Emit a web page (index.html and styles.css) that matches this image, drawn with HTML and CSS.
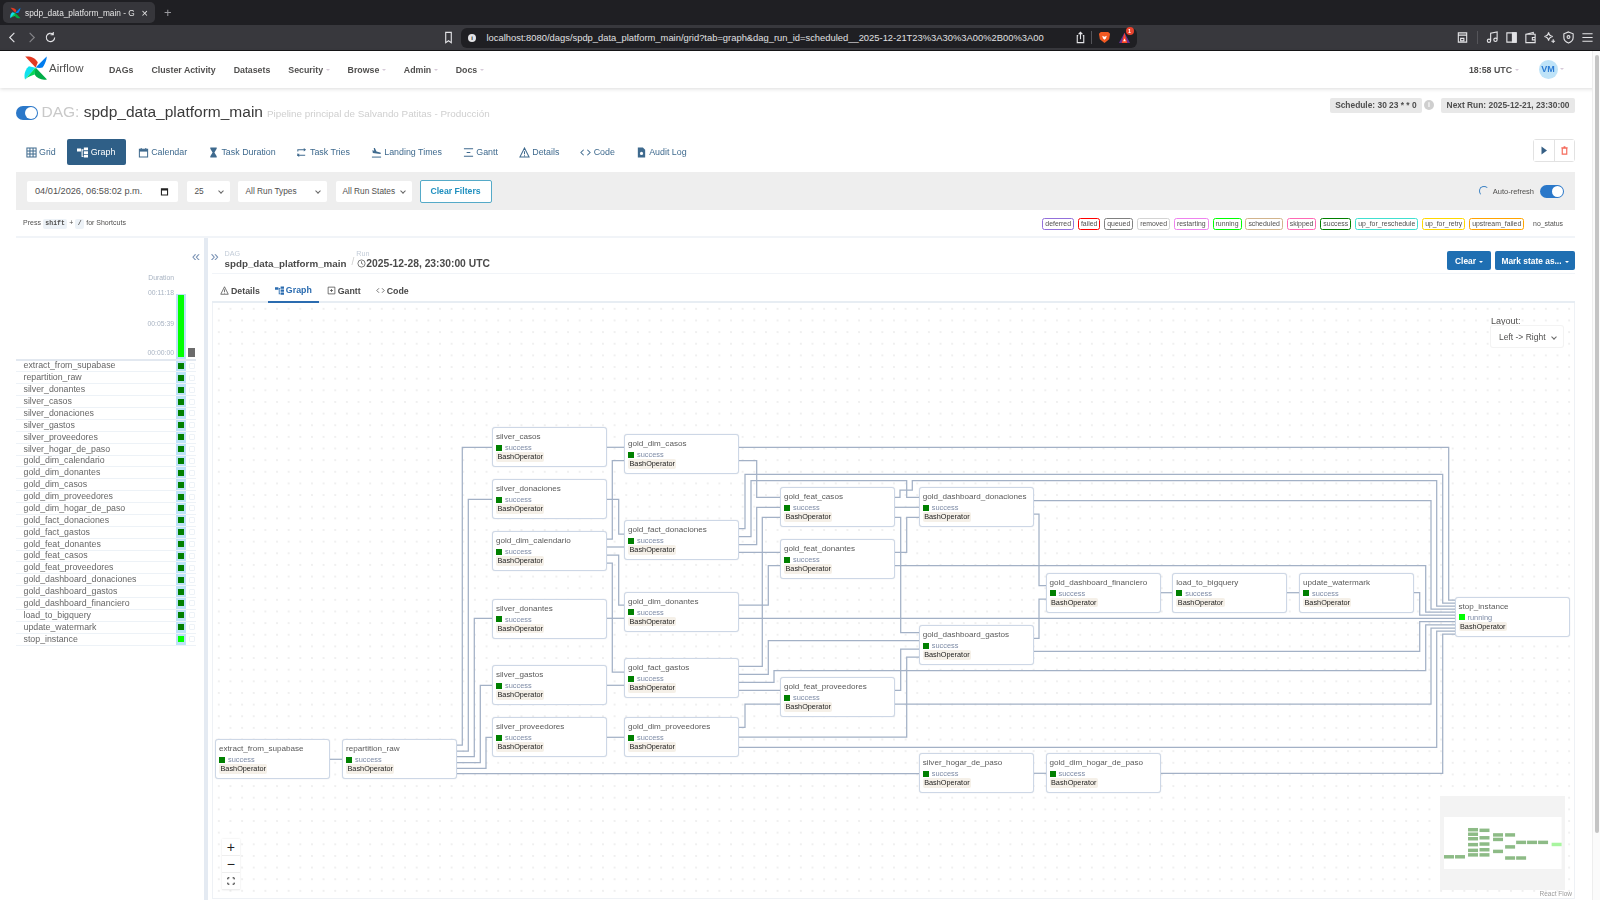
FILE: index.html
```html
<!DOCTYPE html>
<html lang="en">
<head>
<meta charset="utf-8">
<title>spdp_data_platform_main - Grid - Airflow</title>
<link rel="stylesheet" href="styles.css">
</head>
<body>
<svg class="defs" width="0" height="0" aria-hidden="true">
  <symbol id="logo" viewBox="0 0 24 24">
    <path fill="#e43921" d="M11.6 11.6 1.2.6C5.5-.2 11.8 1.6 13.8 6.6z"/>
    <path fill="#017cee" d="M11.6 11.6 22.6.4c.5 1-1 7-4 11.2-1.500.6-4.500.6-7 0z"/>
    <path fill="#11e1ee" d="M11.400 11.800 1 23.400C-.4 19 .9 13.500 4.900 10.200z"/>
    <path fill="#00ad46" d="M11.800 11.800 23 23.400c-4.500 1-10-.4-12.400-4.800-.6-2.200.2-5 1.200-6.800z"/>
    <path fill="#04d659" d="M11.600 11.600 1 23.400c3-2.800 7.500-4 9.600-4.800z"/>
  </symbol>
  <symbol id="graphico" viewBox="0 0 12 11">
    <path fill="currentColor" d="M0 1h4.500v3.500H0zM7.500 0H12v3H7.500zM7.500 4H12v3H7.500zM7.500 8H12v3H7.500zM5 2h2v1.200H6.200v6.300H7v1H5z"/>
  </symbol>
</svg>

<div class="page">
  <header class="chrome">
    <div class="tabbar">
      <div class="tab">
        <svg class="favicon"><use href="#logo"/></svg>
        <span class="tab-title">spdp_data_platform_main - G</span>
        <span class="tab-close">×</span>
      </div>
      <span class="tab-new">+</span>
    </div>
    <div class="toolbar">
      <div class="tb-nav">
        <svg class="tb-ico" viewBox="0 0 14 14"><path d="M9 2 4 7l5 5"/></svg>
        <svg class="tb-ico dim" viewBox="0 0 14 14"><path d="m5 2 5 5-5 5"/></svg>
        <svg class="tb-ico" viewBox="0 0 14 14"><path d="M11.500 7a4.500 4.500 0 1 1-1.600-3.500M10 1v3H7"/></svg>
      </div>
      <svg class="tb-ico bookmark" viewBox="0 0 14 14"><path d="M4 1.500h6v11l-3-2-3 2z"/></svg>
      <div class="urlbar">
        <span class="url-info">i</span>
        <span class="url-text">localhost:8080/dags/spdp_data_platform_main/grid?tab=graph&amp;dag_run_id=scheduled__2025-12-21T23%3A30%3A00%2B00%3A00</span>
        <svg class="tb-ico share" viewBox="0 0 14 14"><path d="M4.500 5H3.500v7.500h7V5h-1M7 9V1.500M5 3.500l2-2 2 2"/></svg>
        <span class="url-sep"></span>
        <svg class="brave" viewBox="0 0 14 14"><path fill="#f15a22" d="M3 1h8l2 2-1 6-5 4-5-4-1-6z"/><path fill="#fff" d="M4.500 5 7 6.200 9.500 5 8.500 8 7 9.500 5.500 8z"/></svg>
        <span class="rewards">
          <svg class="brave" viewBox="0 0 14 14"><path fill="#662d91" d="M7 2 13 13H1z"/><path fill="#ff4724" d="M7 2 10 13H4z"/><path fill="#fff" d="M7 8l1.500 3h-3z"/></svg>
          <b class="badge">1</b>
        </span>
      </div>
      <div class="tb-right">
        <svg class="tb-ico" viewBox="0 0 14 14"><path d="M2.500 2h9v10h-9zM2.500 4.500h9M5 8h3.500v2.500H5z"/></svg>
        <span class="tb-sep"></span>
        <svg class="tb-ico" viewBox="0 0 14 14"><path d="M5 10.500V2.500l7-1.500v8M5 10.500a1.800 1.800 0 1 1-3.600 0 1.800 1.800 0 0 1 3.600 0zM12 9.500a1.800 1.800 0 1 1-3.600 0 1.800 1.800 0 0 1 3.600 0z"/></svg>
        <svg class="tb-ico" viewBox="0 0 14 14"><path d="M2 2h10v10H2z"/><path class="solid" d="M8 2h4v10H8z"/></svg>
        <svg class="tb-ico" viewBox="0 0 14 14"><path d="M2 3.500 10 1.500v2M2 3.500h10v9H2zM9 7h3v2.500H9z"/></svg>
        <svg class="tb-ico" viewBox="0 0 14 14"><path d="M6 1.500c.5 3 1.500 4 4.500 4.500-3 .5-4 1.500-4.500 4.500-.5-3-1.500-4-4.500-4.500 3-.5 4-1.500 4.500-4.500zM11 9v4M9 11h4"/></svg>
        <svg class="tb-ico" viewBox="0 0 14 14"><path d="M7 1 12 3v4c0 3-2.500 5-5 6-2.500-1-5-3-5-6V3zM7 5a1.500 1.500 0 1 1 0 3 1.500 1.500 0 0 1 0-3z"/></svg>
        <svg class="tb-ico" viewBox="0 0 14 14"><path d="M1.500 3h11M1.500 7h11M1.500 11h11"/></svg>
      </div>
    </div>
  </header>

  <nav class="nav">
    <div class="brand">
      <svg class="brand-logo"><use href="#logo"/></svg>
      <span class="brand-name">Airflow</span>
    </div>
    <ul class="nav-list">
      <li>DAGs</li>
      <li>Cluster Activity</li>
      <li>Datasets</li>
      <li class="caret">Security</li>
      <li class="caret">Browse</li>
      <li class="caret">Admin</li>
      <li class="caret">Docs</li>
    </ul>
    <div class="nav-right">
      <span class="caret clock">18:58 UTC</span>
      <span class="caret user"><span class="avatar">VM</span></span>
    </div>
  </nav>

  <main class="main">
    <div class="title-row">
      <div class="title-left">
        <span class="toggle big"></span>
        <h1 class="dag-title"><span class="dag-prefix">DAG:</span> spdp_data_platform_main</h1>
        <span class="dag-desc">Pipeline principal de Salvando Patitas - Producción</span>
      </div>
      <div class="title-right">
        <span class="pill">Schedule: 30 23 * * 0</span>
        <span class="pill-info">i</span>
        <span class="pill">Next Run: 2025-12-21, 23:30:00</span>
      </div>
    </div>

    <div class="view-row">
      <div class="view-tabs">
        <a class="vt vt-grid"><svg class="vi" viewBox="0 0 12 12"><path class="ln" d="M1 1h10v10H1zM1 4.300h10M1 7.700h10M4.300 1v10M7.700 1v10"/></svg>Grid</a>
        <a class="vt active"><svg class="vi"><use href="#graphico"/></svg>Graph</a>
        <a class="vt"><svg class="vi" viewBox="0 0 12 12"><path d="M1.500 2.500h9v8.500h-9zM3.500 1v2M8.500 1v2" class="ln"/><path d="M1.500 2.500h9V5h-9z"/></svg>Calendar</a>
        <a class="vt"><svg class="vi" viewBox="0 0 12 12"><path d="M2.500.5h7v1.500L7 6l2.500 4v1.500h-7V10L5 6 2.500 2z"/></svg>Task Duration</a>
        <a class="vt"><svg class="vi" viewBox="0 0 12 12"><path class="ln" d="M2 5V3h7M2 7v2h8"/><path d="M8.500 1 11 3 8.500 5zM3.500 7 1 9l2.500 2z"/></svg>Task Tries</a>
        <a class="vt"><svg class="vi" viewBox="0 0 12 12"><path class="ln" d="M1 11h10"/><path d="M3 1h1.200l1.800 4 4 1c1 .4 1 1.500 0 1.500L2 6.500 1.500 3.500l1 0L3.500 5z"/></svg>Landing Times</a>
        <a class="vt"><svg class="vi" viewBox="0 0 12 12"><path class="ln" d="M1 2h10M4 6h4M1 10h10"/></svg>Gantt</a>
        <a class="vt"><svg class="vi" viewBox="0 0 12 12"><path class="ln" d="M6 1 11 11H1zM6 4.500V8M6 9v1"/></svg>Details</a>
        <a class="vt"><svg class="vi" viewBox="0 0 12 12"><path class="ln" d="M4 3 1 6l3 3M8 3l3 3-3 3"/></svg>Code</a>
        <a class="vt"><svg class="vi" viewBox="0 0 12 12"><path d="M2 .5h5.500L10 3v8.500H2z"/><circle cx="6" cy="7" r="1.700" fill="#fff"/></svg>Audit Log</a>
      </div>
      <div class="dag-actions">
        <button class="act"><svg viewBox="0 0 10 10"><path fill="#365f84" d="M2.500 1 8 5l-5.500 4z"/></svg></button>
        <button class="act"><svg viewBox="0 0 10 10"><path fill="none" stroke="#f56a5b" stroke-width="1.300" d="M2.500 2.500h5v6.500h-5zM1.500 2h7M4 1h2"/></svg></button>
      </div>
    </div>

    <div class="filters">
      <div class="filter-left">
        <span class="field f-date">04/01/2026, 06:58:02 p.m.
          <svg viewBox="0 0 10 10"><path fill="#222" d="M1 1.500h8V9.500H1zM2.200 3.800v4.500h5.600V3.800z"/></svg>
        </span>
        <span class="field f-size chev">25</span>
        <span class="field f-types chev">All Run Types</span>
        <span class="field f-states chev">All Run States</span>
        <button class="clear-filters">Clear Filters</button>
      </div>
      <div class="refresh">
        <span class="spinner"></span>
        <span>Auto-refresh</span>
        <span class="toggle"></span>
      </div>
    </div>

    <div class="legend-row">
      <div class="shortcut">Press <kbd>shift</kbd> + <kbd>/</kbd> for Shortcuts</div>
      <div class="legend">
        <span class="lg s-deferred">deferred</span>
        <span class="lg s-failed">failed</span>
        <span class="lg s-queued">queued</span>
        <span class="lg s-removed">removed</span>
        <span class="lg s-restarting">restarting</span>
        <span class="lg s-running">running</span>
        <span class="lg s-scheduled">scheduled</span>
        <span class="lg s-skipped">skipped</span>
        <span class="lg s-success">success</span>
        <span class="lg s-reschedule">up_for_reschedule</span>
        <span class="lg s-retry">up_for_retry</span>
        <span class="lg s-upstream">upstream_failed</span>
        <span class="lg s-none">no_status</span>
      </div>
    </div>

    <div class="content">
      <aside class="grid-panel">
        <div class="collapse">«</div>
        <div class="chart">
          <div class="chart-labels">
            <span class="dur-title">Duration</span>
            <span class="dur-t1">00:11:18</span>
            <span class="dur-t2">00:05:39</span>
            <span class="dur-t3">00:00:00</span>
          </div>
          <div class="chart-col sel"><span class="dur-bar"></span></div>
          <div class="chart-col2"><span class="dur-mini"></span></div>
        </div>
        <ul class="tasks">
          <li><span class="tn">extract_from_supabase</span><span class="cell sel"><i class="sq"></i></span><span class="cell"><i class="eb"></i></span></li>
          <li><span class="tn">repartition_raw</span><span class="cell sel"><i class="sq"></i></span><span class="cell"><i class="eb"></i></span></li>
          <li><span class="tn">silver_donantes</span><span class="cell sel"><i class="sq"></i></span><span class="cell"><i class="eb"></i></span></li>
          <li><span class="tn">silver_casos</span><span class="cell sel"><i class="sq"></i></span><span class="cell"><i class="eb"></i></span></li>
          <li><span class="tn">silver_donaciones</span><span class="cell sel"><i class="sq"></i></span><span class="cell"><i class="eb"></i></span></li>
          <li><span class="tn">silver_gastos</span><span class="cell sel"><i class="sq"></i></span><span class="cell"><i class="eb"></i></span></li>
          <li><span class="tn">silver_proveedores</span><span class="cell sel"><i class="sq"></i></span><span class="cell"><i class="eb"></i></span></li>
          <li><span class="tn">silver_hogar_de_paso</span><span class="cell sel"><i class="sq"></i></span><span class="cell"><i class="eb"></i></span></li>
          <li><span class="tn">gold_dim_calendario</span><span class="cell sel"><i class="sq"></i></span><span class="cell"><i class="eb"></i></span></li>
          <li><span class="tn">gold_dim_donantes</span><span class="cell sel"><i class="sq"></i></span><span class="cell"><i class="eb"></i></span></li>
          <li><span class="tn">gold_dim_casos</span><span class="cell sel"><i class="sq"></i></span><span class="cell"><i class="eb"></i></span></li>
          <li><span class="tn">gold_dim_proveedores</span><span class="cell sel"><i class="sq"></i></span><span class="cell"><i class="eb"></i></span></li>
          <li><span class="tn">gold_dim_hogar_de_paso</span><span class="cell sel"><i class="sq"></i></span><span class="cell"><i class="eb"></i></span></li>
          <li><span class="tn">gold_fact_donaciones</span><span class="cell sel"><i class="sq"></i></span><span class="cell"><i class="eb"></i></span></li>
          <li><span class="tn">gold_fact_gastos</span><span class="cell sel"><i class="sq"></i></span><span class="cell"><i class="eb"></i></span></li>
          <li><span class="tn">gold_feat_donantes</span><span class="cell sel"><i class="sq"></i></span><span class="cell"><i class="eb"></i></span></li>
          <li><span class="tn">gold_feat_casos</span><span class="cell sel"><i class="sq"></i></span><span class="cell"><i class="eb"></i></span></li>
          <li><span class="tn">gold_feat_proveedores</span><span class="cell sel"><i class="sq"></i></span><span class="cell"><i class="eb"></i></span></li>
          <li><span class="tn">gold_dashboard_donaciones</span><span class="cell sel"><i class="sq"></i></span><span class="cell"><i class="eb"></i></span></li>
          <li><span class="tn">gold_dashboard_gastos</span><span class="cell sel"><i class="sq"></i></span><span class="cell"><i class="eb"></i></span></li>
          <li><span class="tn">gold_dashboard_financiero</span><span class="cell sel"><i class="sq"></i></span><span class="cell"><i class="eb"></i></span></li>
          <li><span class="tn">load_to_bigquery</span><span class="cell sel"><i class="sq"></i></span><span class="cell"><i class="eb"></i></span></li>
          <li><span class="tn">update_watermark</span><span class="cell sel"><i class="sq"></i></span><span class="cell"><i class="eb"></i></span></li>
          <li><span class="tn">stop_instance</span><span class="cell sel"><i class="sq run"></i></span><span class="cell"><i class="eb"></i></span></li>
        </ul>
      </aside>

      <section class="detail">
        <div class="crumbs">
          <div class="crumb-left">
            <span class="expand">»</span>
            <div class="crumb">
              <span class="crumb-label">DAG</span>
              <span class="crumb-value">spdp_data_platform_main</span>
            </div>
            <span class="crumb-slash">/</span>
            <div class="crumb">
              <span class="crumb-label">Run</span>
              <span class="crumb-value run-val"><svg viewBox="0 0 10 10"><circle cx="5" cy="5" r="4"/><path d="M5 2.500V5l1.800 1"/></svg>2025-12-28, 23:30:00 UTC</span>
            </div>
          </div>
          <div class="crumb-actions">
            <button class="blue btn-clear">Clear</button>
            <button class="blue btn-mark">Mark state as...</button>
          </div>
        </div>
        <div class="sub-tabs">
          <a class="st"><svg viewBox="0 0 12 12"><path d="M6 1 11 11H1zM6 4.500V8M6 9v1"/></svg>Details</a>
          <a class="st on"><svg class="solid-ico"><use href="#graphico"/></svg>Graph</a>
          <a class="st"><svg viewBox="0 0 12 12"><path d="M1.500 1.500h9v9h-9zM4 6h4M6 4v4"/></svg>Gantt</a>
          <a class="st"><svg viewBox="0 0 12 12"><path d="M4 3 1 6l3 3M8 3l3 3-3 3"/></svg>Code</a>
        </div>

        <div class="canvas">
          <svg class="edges" viewBox="213 303 1362 596">
            <path d="M330 759.300H342"/>
            <path d="M457 745H462.300V447.300H492"/>
            <path d="M457 751H468.300V499.300H492"/>
            <path d="M457 756.700H474.300V618.300H492"/>
            <path d="M457 762.500H480.300V685.300H492"/>
            <path d="M457 768.300H486V737.300H492"/>
            <path d="M457 773.700H919"/>
            <path d="M607 447.300H624"/>
            <path d="M607 539H612.300V460.700H624"/>
            <path d="M607 499.300H618.700V534H624"/>
            <path d="M607 547H624"/>
            <path d="M607 555H618.700V605H624"/>
            <path d="M607 618.300H624"/>
            <path d="M607 563H612.300V672H624"/>
            <path d="M607 685.300H624"/>
            <path d="M607 737.300H624"/>
            <path d="M739 447.300H1448.700V600H1455"/>
            <path d="M739 460.700H756.700V497.300H780"/>
            <path d="M739 528.700H745V474.300H1442.700V603H1455"/>
            <path d="M739 536.700H751V480.700H906.700V497.300H919"/>
            <path d="M739 544.700H756.700V507.300H780"/>
            <path d="M739 552.300H780"/>
            <path d="M739 605H768.300V565.700H780"/>
            <path d="M739 618.300H1455"/>
            <path d="M739 666.300H762.300V517.300H780"/>
            <path d="M739 674.300H768.300V640.700H919"/>
            <path d="M739 682.300H774V670.700H1425.700V624.800H1455"/>
            <path d="M739 690.300H780"/>
            <path d="M739 727.300H745V704H780"/>
            <path d="M739 737H906.700V657H919"/>
            <path d="M739 747.300H1436.700V631H1455"/>
            <path d="M895 497.300H900V490H912.300V480.700H1436.700V606H1455"/>
            <path d="M895 507.300H919"/>
            <path d="M895 517.300H900.700V632.700H919"/>
            <path d="M895 552.300H906.700V517.300H919"/>
            <path d="M895 565.700H1425.700V612H1455"/>
            <path d="M895 690.300H900.700V649H919"/>
            <path d="M895 704H1431V628H1455"/>
            <path d="M1033 500.700H1431V609H1455"/>
            <path d="M1033 514H1039V585.700H1046"/>
            <path d="M1033 638.300H1039V599H1046"/>
            <path d="M1033 651.300H1419.700V621.700H1455"/>
            <path d="M1160 592.700H1172"/>
            <path d="M1287 592.700H1299"/>
            <path d="M1413.500 592.700H1419.700V615H1455"/>
            <path d="M1033 773.300H1046"/>
            <path d="M1160 773.300H1442.700V634H1455"/>
          </svg>

          <div class="node n-extract"><b>extract_from_supabase</b><span class="st-line"><i></i>success</span><em>BashOperator</em></div>
          <div class="node n-repartition"><b>repartition_raw</b><span class="st-line"><i></i>success</span><em>BashOperator</em></div>
          <div class="node n-s-casos"><b>silver_casos</b><span class="st-line"><i></i>success</span><em>BashOperator</em></div>
          <div class="node n-s-donaciones"><b>silver_donaciones</b><span class="st-line"><i></i>success</span><em>BashOperator</em></div>
          <div class="node n-calendario"><b>gold_dim_calendario</b><span class="st-line"><i></i>success</span><em>BashOperator</em></div>
          <div class="node n-s-donantes"><b>silver_donantes</b><span class="st-line"><i></i>success</span><em>BashOperator</em></div>
          <div class="node n-s-gastos"><b>silver_gastos</b><span class="st-line"><i></i>success</span><em>BashOperator</em></div>
          <div class="node n-s-proveedores"><b>silver_proveedores</b><span class="st-line"><i></i>success</span><em>BashOperator</em></div>
          <div class="node n-d-casos"><b>gold_dim_casos</b><span class="st-line"><i></i>success</span><em>BashOperator</em></div>
          <div class="node n-f-donaciones"><b>gold_fact_donaciones</b><span class="st-line"><i></i>success</span><em>BashOperator</em></div>
          <div class="node n-d-donantes"><b>gold_dim_donantes</b><span class="st-line"><i></i>success</span><em>BashOperator</em></div>
          <div class="node n-f-gastos"><b>gold_fact_gastos</b><span class="st-line"><i></i>success</span><em>BashOperator</em></div>
          <div class="node n-d-proveedores"><b>gold_dim_proveedores</b><span class="st-line"><i></i>success</span><em>BashOperator</em></div>
          <div class="node n-ft-casos"><b>gold_feat_casos</b><span class="st-line"><i></i>success</span><em>BashOperator</em></div>
          <div class="node n-ft-donantes"><b>gold_feat_donantes</b><span class="st-line"><i></i>success</span><em>BashOperator</em></div>
          <div class="node n-ft-proveedores"><b>gold_feat_proveedores</b><span class="st-line"><i></i>success</span><em>BashOperator</em></div>
          <div class="node n-db-donaciones"><b>gold_dashboard_donaciones</b><span class="st-line"><i></i>success</span><em>BashOperator</em></div>
          <div class="node n-db-gastos"><b>gold_dashboard_gastos</b><span class="st-line"><i></i>success</span><em>BashOperator</em></div>
          <div class="node n-s-hogar"><b>silver_hogar_de_paso</b><span class="st-line"><i></i>success</span><em>BashOperator</em></div>
          <div class="node n-d-hogar"><b>gold_dim_hogar_de_paso</b><span class="st-line"><i></i>success</span><em>BashOperator</em></div>
          <div class="node n-db-financiero"><b>gold_dashboard_financiero</b><span class="st-line"><i></i>success</span><em>BashOperator</em></div>
          <div class="node n-load"><b>load_to_bigquery</b><span class="st-line"><i></i>success</span><em>BashOperator</em></div>
          <div class="node n-watermark"><b>update_watermark</b><span class="st-line"><i></i>success</span><em>BashOperator</em></div>
          <div class="node n-stop"><b>stop_instance</b><span class="st-line running"><i></i>running</span><em>BashOperator</em></div>

          <div class="layout-box">
            <label>Layout:</label>
            <span class="field f-layout chev">Left -&gt; Right</span>
          </div>

          <div class="rf-controls">
            <button>+</button>
            <button>−</button>
            <button><svg viewBox="0 0 10 10"><path d="M1 3V1h2M7 1h2v2M9 7v2H7M3 9H1V7"/></svg></button>
          </div>

          <svg class="minimap" viewBox="169 58.600 1440 1083">
            <rect class="mm-view" x="215" y="300.500" width="1355" height="599"/>
            <g class="mm-n">
              <rect x="215" y="739" width="115" height="40"/><rect x="342" y="739" width="115" height="40"/>
              <rect x="492" y="427" width="115" height="40"/><rect x="492" y="479" width="115" height="40"/>
              <rect x="492" y="531" width="115" height="40"/><rect x="492" y="599" width="115" height="40"/>
              <rect x="492" y="665" width="115" height="40"/><rect x="492" y="717" width="115" height="40"/>
              <rect x="624" y="434" width="115" height="40"/><rect x="624" y="520" width="115" height="40"/>
              <rect x="624" y="592" width="115" height="40"/><rect x="624" y="658" width="115" height="40"/>
              <rect x="624" y="717" width="115" height="40"/><rect x="780" y="487" width="115" height="40"/>
              <rect x="780" y="539" width="115" height="40"/><rect x="780" y="677" width="115" height="40"/>
              <rect x="919" y="487" width="115" height="40"/><rect x="919" y="625" width="115" height="40"/>
              <rect x="919" y="753" width="115" height="40"/><rect x="1046" y="753" width="115" height="40"/>
              <rect x="1046" y="573" width="115" height="40"/><rect x="1172" y="573" width="115" height="40"/>
              <rect x="1299" y="573" width="115" height="40"/>
            </g>
            <rect class="mm-run" x="1455" y="597" width="115" height="40"/>
          </svg>
          <span class="attribution">React Flow</span>
        </div>
      </section>
    </div>
  </main>
  <div class="scrollbar"><span></span></div>
</div>
</body>
</html>
```
FILE: styles.css
```css
* { box-sizing: border-box; }
html, body { margin: 0; height: 900px; overflow: hidden; background: #fff; }
body { font-family: "Liberation Sans", Arial, sans-serif; color: #2d3748; }
ul { list-style: none; margin: 0; padding: 0; }
button { font-family: inherit; cursor: pointer; }
.defs { position: absolute; }
.page { position: relative; width: 1600px; height: 900px; overflow: hidden; filter: blur(.3px); }

/* browser chrome */
.chrome { height: 51px; background: #1f1f23; border-bottom: 1px solid #151517; }
.tabbar { height: 25px; display: flex; align-items: center; padding-left: 3px; gap: 9px; }
.tab { width: 152px; height: 21px; background: #36363b; border-radius: 5px; display: flex; align-items: center; padding: 0 7px; color: #e6e6e6; font-size: 8.300px; }
.favicon { width: 11px; height: 12px; margin-right: 4px; flex: none; }
.tab-title { flex: 1; white-space: nowrap; }
.tab-close { font-size: 11px; margin-left: 4px; }
.tab-new { color: #9a9a9f; font-size: 13px; }
.toolbar { height: 25px; background: #38383d; display: flex; align-items: center; padding-left: 6px; position: relative; }
.tb-nav { display: flex; gap: 6px; width: 436px; }
.tb-ico { width: 13px; height: 13px; fill: none; stroke: #e3e3e6; stroke-width: 1.200; flex: none; }
.tb-ico.dim { stroke: #85858a; }
.tb-ico .solid { fill: #e3e3e6; }
.bookmark { margin-right: 6px; }
.urlbar { width: 676px; height: 20px; background: #1f1f23; border-radius: 6px; display: flex; align-items: center; padding: 0 6px 0 7px; color: #e0e0e2; font-size: 9.400px; }
.url-info { width: 8px; height: 8px; border-radius: 50%; background: #e3e3e6; color: #1f1f23; font-size: 6px; font-weight: 700; text-align: center; line-height: 8px; margin: 0 10.500px 0 0; flex: none; }
.url-text { width: 582px; white-space: nowrap; flex: none; }
.share { margin-left: 5px; }
.url-sep { width: 1px; height: 13px; background: #55555a; margin: 0 6px 0 4px; flex: none; }
.brave { width: 13px; height: 13px; flex: none; }
.rewards { position: relative; margin-left: 7px; display: flex; }
.badge { position: absolute; top: -4px; right: -3px; width: 8px; height: 8px; border-radius: 50%; background: #e8432e; color: #fff; font-size: 5.500px; line-height: 8px; text-align: center; }
.tb-right { display: flex; align-items: center; gap: 6px; margin-left: 318.500px; }
.tb-sep { width: 1px; height: 13px; background: #55555a; margin: 0 2px; }

/* nav */
.nav { height: 37px; display: flex; align-items: center; padding: 0 16px 0 24px; position: relative; background: #fff; box-shadow: 0 1px 4px rgba(0, 0, 0, .14); }
.brand { display: flex; align-items: center; width: 85px; }
.brand-logo { width: 24px; height: 24px; flex: none; margin-top: -4px; }
.brand-name { font-size: 11.500px; color: #51504f; margin: -4px 0 0 1px; }
.nav-list { display: flex; gap: 18px; font-size: 8.800px; font-weight: 700; color: #51504f; }
.caret::after { content: ""; display: inline-block; border: 2px solid transparent; border-top: 2.500px solid #d7cbd9; border-bottom: 0; margin-left: 2.500px; vertical-align: 2px; }
.nav-right { margin-left: auto; display: flex; align-items: center; font-size: 8.800px; font-weight: 700; color: #51504f; margin-right: 20px; }
.clock { margin-right: 20px; }
.avatar { display: inline-block; width: 19px; height: 19px; border-radius: 50%; background: #bee3f8; color: #2b7bd4; text-align: center; line-height: 19px; font-size: 9px; }

/* main */
.main { padding: 0 25px 0 15.500px; }
.title-row { height: 51px; display: flex; justify-content: space-between; align-items: flex-start; }
.title-left { display: flex; align-items: center; margin-top: 14px; }
.toggle { display: inline-block; width: 24px; height: 13px; border-radius: 7px; background: #2b78c9; position: relative; }
.toggle::after { content: ""; position: absolute; right: 1px; top: 1px; width: 11px; height: 11px; border-radius: 50%; background: #fff; }
.toggle.big { width: 22px; height: 14px; margin-top: 2px; }
.toggle.big::after { width: 12px; height: 12px; }
.dag-title { font-size: 15.500px; font-weight: 400; color: #3a3a3a; margin: 0 4px 0 4px; line-height: 20px; }
.dag-prefix { color: #c9c9c9; }
.dag-desc { font-size: 9.860px; color: #cfcfcf; margin-top: 2px; }
.title-right { display: flex; align-items: center; margin-top: 10px; font-size: 8.400px; font-weight: 700; color: #4e4e4e; }
.pill { background: #e8e8e8; border-radius: 2px; padding: 0 5.500px; height: 14.500px; line-height: 14.500px; }
.pill-info { width: 10px; height: 10px; border-radius: 50%; background: #cfcfcf; color: #fff; font-size: 7px; text-align: center; line-height: 10px; margin: 0 7px 0 2px; }

.view-row { height: 33px; display: flex; justify-content: space-between; align-items: flex-start; }
.view-tabs { display: flex; align-items: center; height: 26px; font-size: 8.900px; color: #3f6a8e; }
.vt { display: flex; align-items: center; height: 26px; padding: 0 10.400px; border-radius: 2px; white-space: nowrap; }
.vt-grid { padding-left: 10px; padding-right: 11px; }
.vt.active { background: #2f5f87; color: #fff; margin-right: 1.500px; }
.vi { width: 11px; height: 11px; margin-right: 2.500px; flex: none; fill: currentColor; }
.vi .ln { fill: none; stroke: currentColor; stroke-width: 1.100; }
.dag-actions { display: flex; border: 1px solid #e2e2e2; border-radius: 3px; height: 23px; }
.act { width: 20px; background: #fff; border: 0; padding: 5px; display: flex; align-items: center; justify-content: center; }
.act + .act { border-left: 1px solid #e2e2e2; }
.act svg { width: 11px; height: 11px; }

.filters { height: 38px; background: #eeeeee; display: flex; justify-content: space-between; align-items: center; padding: 0 11px 0 11.500px; }
.filter-left { display: flex; align-items: center; }
.field { display: flex; align-items: center; height: 21px; background: #fff; border-radius: 2px; font-size: 8.300px; color: #51504f; padding-left: 8px; position: relative; white-space: nowrap; }
.f-date { width: 151px; margin-right: 8.500px; justify-content: space-between; padding-right: 9px; font-size: 9.200px; }
.f-date svg { width: 9px; height: 9px; }
.f-size { width: 43px; margin-right: 8px; }
.f-types { width: 89px; margin-right: 9px; }
.f-states { width: 76px; margin-right: 8px; padding-left: 7px; }
.chev::after { content: ""; position: absolute; right: 7px; top: 8.500px; width: 3px; height: 3px; border-right: 1px solid #666; border-bottom: 1px solid #666; transform: rotate(45deg); }
.clear-filters { width: 72px; height: 23px; background: #fff; border: 1px solid #55aac8; border-radius: 2px; color: #1f8fbf; font-size: 8.700px; font-weight: 700; padding: 0; }
.refresh { display: flex; align-items: center; font-size: 7.500px; color: #51504f; }
.spinner { width: 10px; height: 10px; border-radius: 50%; border: 1px solid transparent; border-left-color: #3b82c4; border-top-color: #3b82c4; margin-right: 4px; }
.refresh .toggle { margin-left: 6px; }

.legend-row { height: 28px; display: flex; justify-content: space-between; align-items: center; border-bottom: 2px solid #f1f4f8; padding: 2px 10px 0 7.500px; }
.shortcut { font-size: 7px; color: #51504f; }
kbd { display: inline-block; font-family: "Liberation Mono", monospace; font-size: 6.500px; font-weight: 700; background: #edf2f7; border-radius: 2px; padding: 0 2.500px; height: 10px; line-height: 10px; }
.legend { display: flex; gap: 3.900px; font-size: 6.900px; color: #51504f; }
.lg { height: 11.500px; line-height: 9px; padding: 0 2px; border: 1.250px solid #ccc; border-radius: 2.500px; white-space: nowrap; }
.s-deferred { border-color: mediumpurple; }
.s-failed { border-color: red; }
.s-queued { border-color: gray; }
.s-removed { border-color: lightgrey; }
.s-restarting { border-color: violet; }
.s-running { border-color: lime; }
.s-scheduled { border-color: tan; }
.s-skipped { border-color: hotpink; }
.s-success { border-color: green; }
.s-reschedule { border-color: turquoise; }
.s-retry { border-color: gold; }
.s-upstream { border-color: orange; }
.s-none { border: 0; line-height: 11.500px; margin-left: 3px; }

/* content */
.content { display: flex; height: 662px; overflow: hidden; }
.grid-panel { width: 188px; padding-top: 8px; flex: none; border-right: 4px solid #e4eaf2; position: relative; box-sizing: content-box; }
.collapse { position: absolute; right: 3.500px; top: 10.700px; font-size: 15px; line-height: 14px; color: #7b93b5; }
.chart { width: 180.500px; height: 114.500px; display: flex; border-bottom: 2px solid #e2e8f0; }
.chart-labels { width: 160.500px; position: relative; font-size: 6.800px; color: #a8b3c2; text-align: right; }
.chart-labels span { position: absolute; right: 2px; }
.dur-title { top: 27.500px; }
.dur-t1 { top: 42.500px; }
.dur-t2 { top: 74px; }
.dur-t3 { top: 102.500px; }
.chart-col { width: 10px; background: linear-gradient(#fff 48px, #bee3f8 48px); display: flex; justify-content: center; align-items: flex-end; }
.dur-bar { width: 6px; height: 62px; background: #00ff00; margin-bottom: 2px; }
.chart-col2 { display: flex; align-items: flex-end; flex: 1; padding: 0 0 1.500px 2px; }
.dur-mini { width: 6.500px; height: 9px; background: #6b6b6b; }
.tasks { width: 180.500px; font-size: 8.800px; color: #666; }
.tasks li { display: flex; height: 11.880px; border-bottom: 1px solid #edf2f7; align-items: center; }
.tn { width: 160.500px; padding-left: 8px; line-height: 11px; }
.cell { width: 10px; height: 100%; display: flex; align-items: center; justify-content: center; flex: none; }
.cell.sel { background: #bee3f8; }
.sq { width: 6px; height: 6px; background: #008000; }
.sq.run { background: #00ff00; }
.eb { width: 6px; height: 6px; border: 1px solid #edf2f7; border-radius: 1px; margin-left: 2px; }

.detail { flex: 1; padding: 5px 0 0 4.500px; min-width: 0; }
.crumbs { height: 31px; display: flex; justify-content: space-between; align-items: flex-start; border-bottom: 1px solid #f1f4f8; }
.crumb-left { display: flex; align-items: flex-start; }
.expand { font-size: 15px; line-height: 14px; color: #7b93b5; width: 14px; margin: 5.700px 0 0 -1.500px; }
.crumb { display: flex; flex-direction: column; margin-top: 7px; }
.crumb-label { font-size: 7.200px; color: #c3ccd8; line-height: 7px; }
.crumb-value { font-size: 9.800px; font-weight: 700; color: #4a4a4a; line-height: 13px; display: flex; align-items: center; }
.crumb-slash { color: #d0d0d0; font-size: 10px; margin: 13px 2px 0 5px; }
.run-val { color: #4a4a4a; font-size: 10.300px; }
.run-val svg { width: 9px; height: 9px; fill: none; stroke: #4a4a4a; stroke-width: .8; margin-left: 1px; }
.crumb-actions { display: flex; gap: 4px; margin-top: 8px; }
.blue { height: 19px; background: #1f6fb2; color: #fff; border: 0; border-radius: 2px; font-size: 8.400px; font-weight: 700; padding: 0; }
.blue::after { content: ""; display: inline-block; border: 2px solid transparent; border-top: 2.500px solid #fff; border-bottom: 0; margin-left: 3px; vertical-align: 1px; }
.btn-clear { width: 44px; }
.btn-mark { width: 80px; }
.sub-tabs { display: flex; height: 29px; align-items: stretch; padding: 5px 0 0 1px; font-size: 8.800px; font-weight: 700; color: #4a4a4a; border-bottom: 2px solid #e7edf3; }
.st { display: flex; align-items: center; padding: 0 7px 1px; margin-right: 1px; height: 24px; }
.st svg { width: 9px; height: 9px; margin-right: 2px; fill: none; stroke: currentColor; stroke-width: 1; }
.st .solid-ico { fill: currentColor; stroke: none; }
.st.on { color: #2b6cb0; border-bottom: 2px solid #2b6cb0; padding-bottom: 0; }

.canvas { position: relative; width: 1363px; height: 596px; border: 1px solid #eef1f5; border-top: 0; background-color: #fff; background-image: radial-gradient(circle, #d6d6d6 .5px, transparent .8px); background-size: 11.650px 11.650px; overflow: hidden; }
.edges { position: absolute; left: 0; top: 0; width: 1362px; height: 596px; fill: none; stroke: #a3b1c6; stroke-width: 1.250; }
.node { position: absolute; width: 115px; height: 40px; background: #fff; border: 1px solid #cdd7e6; border-radius: 3px; padding: 3px 0 0 3px; display: flex; flex-direction: column; align-items: flex-start; box-shadow: 0 0 1px rgba(160, 174, 192, .5); }
.node b { font-weight: 400; font-size: 8.100px; color: #5a5a5a; line-height: 12px; }
.st-line { display: flex; align-items: center; font-size: 7.400px; color: #7c8aa5; height: 9px; }
.st-line i { width: 6px; height: 6px; background: #008000; margin-right: 3px; }
.st-line.running i { background: #00ff00; }
.node em { font-style: normal; font-size: 7.300px; color: #222; background: #f5f0e8; border-radius: 2px; padding: 0 1.500px; line-height: 9.500px; }
.n-extract { left: 2px; top: 436.300px; }
.n-repartition { left: 129px; top: 436.300px; }
.n-s-casos { left: 279px; top: 124.300px; }
.n-s-donaciones { left: 279px; top: 176.300px; }
.n-calendario { left: 279px; top: 228.300px; }
.n-s-donantes { left: 279px; top: 295.700px; }
.n-s-gastos { left: 279px; top: 362.300px; }
.n-s-proveedores { left: 279px; top: 414.300px; }
.n-d-casos { left: 411px; top: 131px; }
.n-f-donaciones { left: 411px; top: 217.300px; }
.n-d-donantes { left: 411px; top: 288.700px; }
.n-f-gastos { left: 411px; top: 355.300px; }
.n-d-proveedores { left: 411px; top: 414.300px; }
.n-ft-casos { left: 567px; top: 184.300px; }
.n-ft-donantes { left: 567px; top: 236.300px; }
.n-ft-proveedores { left: 567px; top: 374.300px; }
.n-db-donaciones { left: 705.700px; top: 184.300px; }
.n-db-gastos { left: 705.700px; top: 322px; }
.n-s-hogar { left: 705.700px; top: 450.300px; }
.n-d-hogar { left: 832.500px; top: 450.300px; }
.n-db-financiero { left: 832.500px; top: 269.700px; }
.n-load { left: 959.300px; top: 269.700px; }
.n-watermark { left: 1086px; top: 269.700px; }
.n-stop { left: 1241.500px; top: 293.700px; }

.layout-box { position: absolute; right: 11px; top: 13px; width: 72px; font-size: 9px; color: #51504f; }
.layout-box label { display: block; line-height: 10px; }
.f-layout { height: 21px; font-size: 8.500px; margin-top: 0; box-shadow: 0 0 0 1px #f3f3f3; }
.rf-controls { position: absolute; left: 9px; top: 536px; width: 17.500px; box-shadow: 0 0 2px rgba(0, 0, 0, .1); }
.rf-controls button { display: flex; align-items: center; justify-content: center; width: 100%; height: 17px; border: 0; border-bottom: 1px solid #eee; background: #fff; padding: 0; font-size: 14px; color: #222; line-height: 1; }
.rf-controls svg { width: 8px; height: 8px; fill: none; stroke: #222; stroke-width: 1.200; }
.minimap { position: absolute; left: 1227px; top: 493px; width: 125px; height: 94px; background: #f3f3f3; }
.mm-view { fill: #fff; }
.mm-n rect { fill: #8dbb86; }
.mm-run { fill: #a8f59f; }
.attribution { position: absolute; right: 2px; bottom: 1px; font-size: 6.500px; color: #9a9a9a; }

.scrollbar { position: absolute; right: 0; top: 51px; bottom: 0; width: 8px; background: #fbfbfb; border-left: 1px solid #eee; }
.scrollbar span { display: block; width: 4px; height: 778px; margin: 4px 0 0 2px; background: #c4c4c4; border-radius: 2px; }
```
